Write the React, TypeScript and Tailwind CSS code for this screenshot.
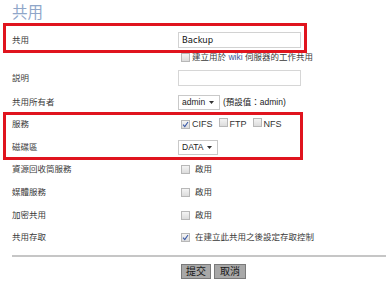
import React from "react";

const FONT = { fontFamily: '"Liberation Sans", "Noto Sans CJK TC", sans-serif' };

function Box({ checked = false }: { checked?: boolean }) {
  return (
    <span className="relative inline-flex h-[9px] w-[9px] shrink-0 items-center justify-center border border-[#b8b8b8] bg-gradient-to-b from-[#f4f4f4] to-[#dcdcdc]">
      {checked && (
        <svg width="7" height="7" viewBox="0 0 7 7" className="absolute">
          <path d="M1 3.6 L2.8 5.6 L6 1" fill="none" stroke="#3a5aa8" strokeWidth="1.1" />
        </svg>
      )}
    </span>
  );
}

function Select({ label, w }: { label: string; w: string }) {
  return (
    <span className={`inline-flex h-[15px] ${w} items-center justify-between border border-[#c9c9c9] bg-white pl-[3px] pr-[5px] text-[8.5px] text-[#222]`}>
      <span>{label}</span>
      <svg width="5" height="3" viewBox="0 0 5 3">
        <path d="M0 0 H5 L2.5 3 Z" fill="#333" />
      </svg>
    </span>
  );
}

function Row({ h, label, children }: { h: string; label?: string; children?: React.ReactNode }) {
  return (
    <div className={`flex ${h} items-center`}>
      <div className="w-[166px] shrink-0 text-[8.5px] text-[#3a3a3a]">{label}</div>
      <div className="flex items-center">{children}</div>
    </div>
  );
}

export default function App() {
  return (
    <div className="relative h-[292px] w-[386px] overflow-hidden bg-white" style={FONT}>
      <div className="pl-[12px]">
        <div className="flex h-[25px] items-center text-[15.5px] leading-none text-[#8fa6c9]">共用</div>
        <div className="mt-[6px]">
          <Row h="h-[18px]" label="共用">
            <span className="flex h-[16px] w-[123px] items-center border border-[#d2d2d2] bg-white pl-[3px] text-[#111]" style={{ fontFamily: '"DejaVu Sans", sans-serif', fontSize: "8.5px" }}>
              Backup
            </span>
          </Row>
        </div>
        <Row h="h-[16px]">
          <span className="ml-[3px] flex items-center gap-[2px] text-[8.5px] text-[#3a3a3a]">
            <Box />
            <span>建立用於 <span className="text-[#3a56a0]">wiki</span> 伺服器的工作共用</span>
          </span>
        </Row>
        <Row h="h-[26px]" label="説明">
          <span className="block h-[16px] w-[123px] border border-[#d6d6d6] bg-white" />
        </Row>
        <Row h="h-[22px]" label="共用所有者">
          <Select label="admin" w="w-[42px]" />
          <span className="ml-[3px] text-[8.5px] text-[#222]">(預設值：admin)</span>
        </Row>
        <Row h="h-[23px]" label="服務">
          <span className="ml-[3px] flex items-center gap-[2px] text-[9px] text-[#333]">
            <Box checked />
            <span>CIFS</span>
            <span className="ml-[4px]"><Box /></span>
            <span>FTP</span>
            <span className="ml-[4px]"><Box /></span>
            <span>NFS</span>
          </span>
        </Row>
        <Row h="h-[22px]" label="磁碟區">
          <Select label="DATA" w="w-[40px]" />
        </Row>
        <Row h="h-[23px]" label="資源回收筒服務">
          <span className="ml-[3px] flex items-center gap-[5px] text-[8.5px] text-[#3a3a3a]">
            <Box />
            <span>啟用</span>
          </span>
        </Row>
        <Row h="h-[23px]" label="媒體服務">
          <span className="ml-[3px] flex items-center gap-[5px] text-[8.5px] text-[#3a3a3a]">
            <Box />
            <span>啟用</span>
          </span>
        </Row>
        <Row h="h-[22px]" label="加密共用">
          <span className="ml-[3px] flex items-center gap-[5px] text-[8.5px] text-[#3a3a3a]">
            <Box />
            <span>啟用</span>
          </span>
        </Row>
        <Row h="h-[23px]" label="共用存取">
          <span className="ml-[3px] flex items-center gap-[5px] text-[8.5px] text-[#3a3a3a]">
            <Box checked />
            <span>在建立此共用之後設定存取控制</span>
          </span>
        </Row>
        <div className="mt-[6px] h-[2px] bg-[#c6c6c6]" />
        <div className="mt-[7px] flex gap-[3px] pl-[169px]">
          <button className="flex h-[15px] w-[30px] items-center justify-center border border-[#7a7a7a] bg-[#a8a8a8] text-[10px] leading-none text-[#1a1a1a]">
            提交
          </button>
          <button className="flex h-[15px] w-[32px] items-center justify-center border border-[#7a7a7a] bg-[#a8a8a8] text-[10px] leading-none text-[#1a1a1a]">
            取消
          </button>
        </div>
      </div>
      <div className="pointer-events-none absolute left-[3px] top-[23px] h-[30px] w-[304px] border-[3px] border-[#e0141e]" />
      <div className="pointer-events-none absolute left-[3px] top-[112px] h-[48px] w-[300px] border-[3px] border-[#e0141e]" />
    </div>
  );
}
